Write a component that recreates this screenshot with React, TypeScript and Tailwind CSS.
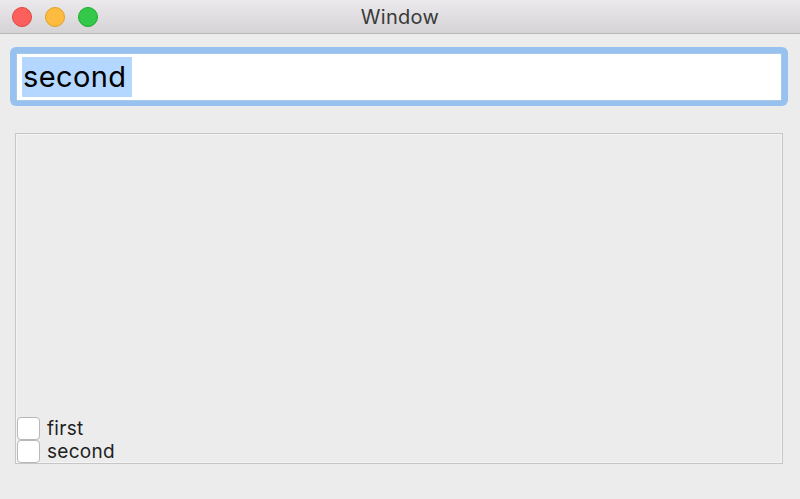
import React from "react";

export default function App() {
  return (
    <div
      className="w-[800px] h-[499px] bg-[#ececec] flex flex-col overflow-hidden"
      style={{ fontFamily: "Inter, 'Liberation Sans', sans-serif" }}
    >
      {/* Title bar */}
      <div className="h-[34px] shrink-0 relative flex items-center justify-center bg-gradient-to-b from-[#ebe9eb] to-[#d5d3d5] border-b border-[#b9b9b9]">
        <div className="absolute left-[12px] top-[7px] flex gap-[13px]">
          <div className="w-[20px] h-[20px] rounded-full bg-[#fc605c] border border-[#e0443e]" />
          <div className="w-[20px] h-[20px] rounded-full bg-[#fdbc40] border border-[#dea123]" />
          <div className="w-[20px] h-[20px] rounded-full bg-[#34c84a] border border-[#1aab29]" />
        </div>
        <span className="text-[20px] text-[#3a3a3a] leading-none tracking-[0.3px] pt-[1px]">Window</span>
      </div>

      {/* Text field with focus ring */}
      <div className="mt-[13px] ml-[10px] w-[778px] h-[59px] rounded-[6px] bg-[#97c1ef] pt-[6px] pb-[5px] px-[6px] shrink-0">
        <div className="w-full h-[48px] bg-white border border-[#a9c7ea] flex items-center pl-[5px]">
          <span className="bg-[#b3d7ff] text-black text-[29px] leading-[40px] h-[40px] pl-[1px] pr-[6px] tracking-[0.4px]">
            second
          </span>
        </div>
      </div>

      {/* List box */}
      <div className="mt-[27px] ml-[15px] w-[768px] h-[331px] border border-[#c6c6c6] shadow-[inset_0_0_0_1px_#f4f4f4] flex flex-col justify-end shrink-0">
        {["first", "second"].map((label) => (
          <div key={label} className="h-[23px] flex items-center pl-[1px]">
            <div className="w-[23px] h-[23px] bg-white border border-[#b8b8b8] rounded-[4px] shrink-0" />
            <span className="ml-[7px] text-[19px] text-[#1e1e1e] leading-none tracking-[0.3px]">
              {label}
            </span>
          </div>
        ))}
      </div>
    </div>
  );
}
